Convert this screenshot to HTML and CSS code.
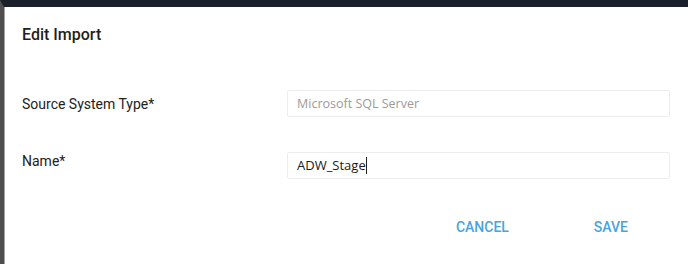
FILE: index.html
```html
<!DOCTYPE html>
<html>
<head>
    <title>Edit Import</title>
    <link rel="stylesheet" href="styles.css">
</head>
<body>
    <div class="backdrop">
        <div class="dialog">
            <h2 class="dialog-title">Edit Import</h2>

            <!-- form rows: label on the left, field on the right -->
            <div class="form-row">
                <label class="form-label">Source System Type*</label>
                <div class="form-field form-field-disabled">Microsoft SQL Server</div>
            </div>
            <div class="form-row form-row-name">
                <label class="form-label">Name*</label>
                <div class="form-field">ADW_Stage<span class="caret"></span></div>
            </div>

            <div class="dialog-actions">
                <button class="action-btn btn-cancel">Cancel</button>
                <button class="action-btn btn-save">Save</button>
            </div>
        </div>
    </div>
</body>
</html>
```

FILE: styles.css
```css
body {
    margin: 0;
    padding: 0;
    background-color: #ffffff;
    font-family: Roboto, "Liberation Sans", sans-serif;
}

/* dark app bar on top and greyed page on the left */
.backdrop {
    height: 264px;
    box-sizing: border-box;
    border-top: 7px solid #19202b;
    border-left: 4px solid #4e4e4e;
}

.dialog {
    height: 100%;
    box-sizing: border-box;
    border-left: 1px solid #a3a3a3;
    background-color: #ffffff;
    padding: 0 18px 0 17px;
}

.dialog-title {
    margin: 0;
    padding-top: 18px;
    font-size: 16px;
    font-weight: 500;
    color: #1e1e1e;
    line-height: 20px;
}

.form-row {
    display: grid;
    grid-template-columns: 265px 1fr;
    align-items: start;
    margin-top: 45px;
}

.form-row-name {
    margin-top: 35px;
}

.form-label {
    font-size: 14px;
    color: #222222;
    line-height: 16px;
    padding-top: 6px;
}

.form-row-name .form-label {
    padding-top: 1px;
}

.form-field {
    height: 27px;
    box-sizing: border-box;
    border: 1px solid #ededed;
    border-radius: 2px;
    padding: 0 9px;
    font-family: "Open Sans", "Noto Sans", sans-serif;
    font-size: 13px;
    line-height: 25px;
    color: #1a1a1a;
}

.form-field-disabled {
    font-size: 12.5px;
    color: #9b9b9b;
}

.caret {
    display: inline-block;
    width: 1px;
    height: 17px;
    background-color: #222222;
    vertical-align: -4px;
}

.dialog-actions {
    display: flex;
    justify-content: flex-end;
    margin-top: 40px;
    padding-right: 42px;
    gap: 85px;
}

.action-btn {
    border: none;
    background: none;
    padding: 0;
    font-family: Roboto, "Liberation Sans", sans-serif;
    font-size: 14px;
    font-weight: 500;
    text-transform: uppercase;
    color: #4aa3df;
    cursor: pointer;
}
```
